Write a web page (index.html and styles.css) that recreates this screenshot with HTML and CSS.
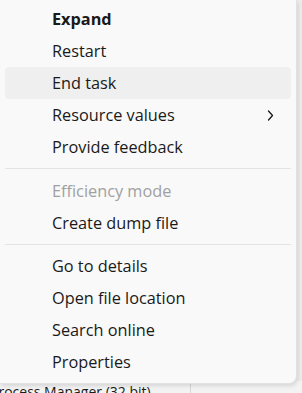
FILE: index.html
```html
<!DOCTYPE html>
<html lang="en">
  <head>
    <meta charset="UTF-8" />
    <title>Context menu</title>
    <link rel="stylesheet" href="styles.css">
  </head>
  <body>
    <div class="app">
      <div class="app-row">
        <span class="proc">Process Manager (32 bit)</span>
        <span class="col-line"></span>
      </div>
    </div>

    <!-- context menu lies over the task list -->
    <ul class="menu">
      <li class="item bold">Expand</li>
      <li class="item">Restart</li>
      <li class="item hover">End task</li>
      <li class="item sub">Resource values
        <svg class="chev" width="7" height="11" viewBox="0 0 7 11"><path d="M1.5 1 L5.5 5.5 L1.5 10" fill="none" stroke="#1a1a1a" stroke-width="1.3" stroke-linecap="round" stroke-linejoin="round"/></svg>
      </li>
      <li class="item">Provide feedback</li>
      <li class="sep first"></li>
      <li class="item off">Efficiency mode</li>
      <li class="item">Create dump file</li>
      <li class="sep"></li>
      <li class="item">Go to details</li>
      <li class="item">Open file location</li>
      <li class="item">Search online</li>
      <li class="item">Properties</li>
    </ul>
  </body>
</html>
```

FILE: styles.css
```css
body {
  margin: 0;
  background-color: #ececec;
  font-family: "Open Sans", "Noto Sans", sans-serif;
  color: #1a1a1a;
  height: 393px;
  overflow: hidden;
  position: relative;
}

.app {
  padding-top: 381px;
}

.app-row {
  display: flex;
  align-items: flex-start;
  height: 20px;
  background-color: #f3f3f3;
}

.proc {
  font-size: 14px;
  margin-left: -10px;
  width: 200px;
  padding-top: 1px;
}

.col-line {
  width: 1px;
  height: 20px;
  background-color: #d6d6d6;
}

.menu {
  position: absolute;
  top: 0;
  left: 0;
  width: 296px;
  margin: 0;
  padding: 3px 0 5px 0;
  list-style: none;
  background-color: #f9f9f9;
  border-right: 1px solid #e2e2e2;
  border-bottom: 1px solid #e2e2e2;
  border-bottom-right-radius: 8px;
  box-shadow: 1px 2px 4px rgba(0, 0, 0, 0.12);
}

.item {
  height: 32px;
  margin: 0 5px;
  padding-left: 47px;
  display: flex;
  align-items: center;
  font-size: 16.3px;
  border-radius: 4px;
}

.bold {
  font-weight: 700;
}

.hover {
  background-color: #efefef;
}

.off {
  color: #a0a0a0;
}

.sub {
  justify-content: space-between;
  padding-right: 17px;
}

.sep {
  height: 1px;
  margin: 5px 5px;
  background-color: #e3e3e3;
}

.sep.first {
  margin-bottom: 6px;
}
```
